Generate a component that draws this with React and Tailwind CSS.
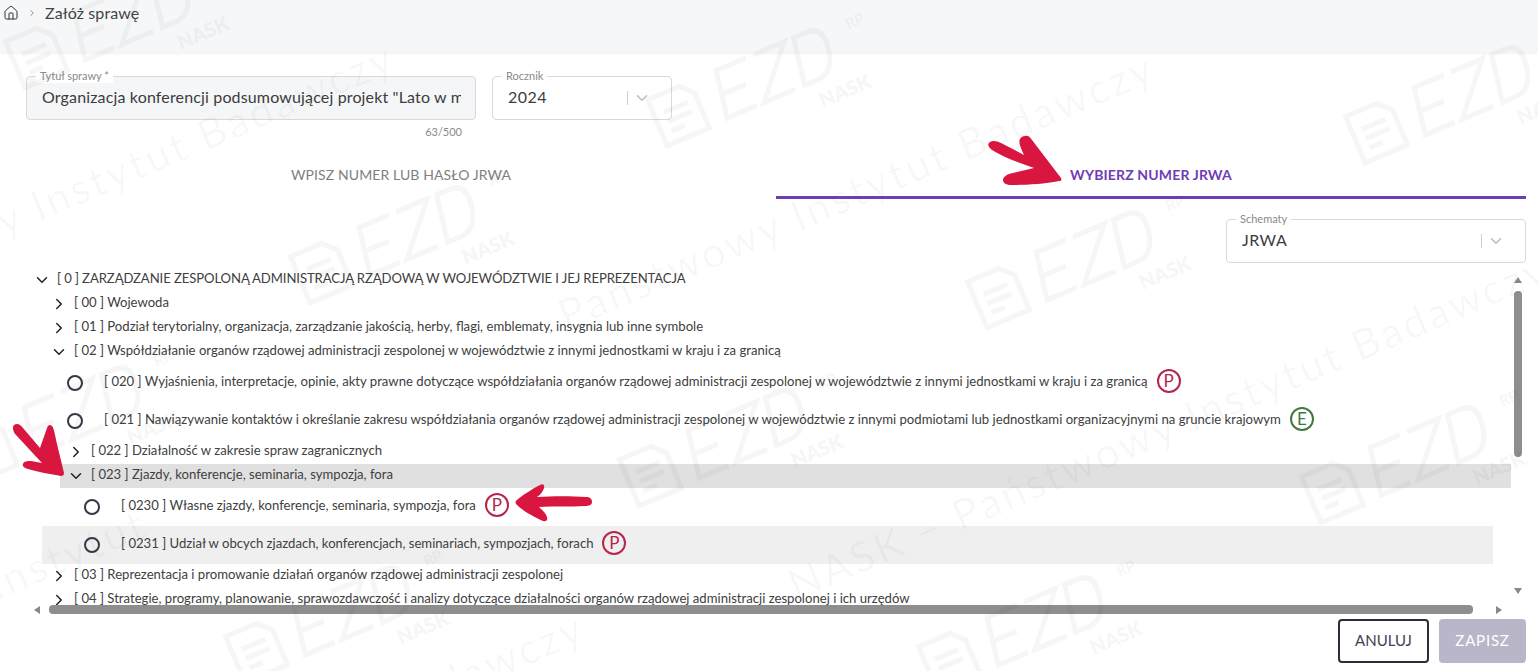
import { ChevronDown, ChevronRight, House } from "lucide-react";

const FONT = "font-['Lato','Liberation_Sans',sans-serif]";

const TREE = [
  { kind: "open", ml: "ml-0", tight: true, label: "[ 0 ] ZARZĄDZANIE ZESPOLONĄ ADMINISTRACJĄ RZĄDOWĄ W WOJEWÓDZTWIE I JEJ REPREZENTACJA" },
  { kind: "closed", ml: "ml-[17px]", label: "[ 00 ] Wojewoda" },
  { kind: "closed", ml: "ml-[17px]", label: "[ 01 ] Podział terytorialny, organizacja, zarządzanie jakością, herby, flagi, emblematy, insygnia lub inne symbole" },
  { kind: "open", ml: "ml-[17px]", label: "[ 02 ] Współdziałanie organów rządowej administracji zespolonej w województwie z innymi jednostkami w kraju i za granicą" },
  { kind: "leaf", ml: "ml-[-1px]", label: "[ 020 ] Wyjaśnienia, interpretacje, opinie, akty prawne dotyczące współdziałania organów rządowej administracji zespolonej w województwie z innymi jednostkami w kraju i za granicą", badge: "P" },
  { kind: "leaf", ml: "ml-[-1px]", label: "[ 021 ] Nawiązywanie kontaktów i określanie zakresu współdziałania organów rządowej administracji zespolonej w województwie z innymi podmiotami lub jednostkami organizacyjnymi na gruncie krajowym", badge: "E" },
  { kind: "closed", ml: "ml-[34px]", label: "[ 022 ] Działalność w zakresie spraw zagranicznych" },
  { kind: "open", ml: "ml-[34px]", label: "[ 023 ] Zjazdy, konferencje, seminaria, sympozja, fora", bg: "bg-[#e0e0e0]" },
  { kind: "leaf", ml: "ml-[16px]", label: "[ 0230 ] Własne zjazdy, konferencje, seminaria, sympozja, fora", badge: "P" },
  { kind: "leaf", ml: "ml-[16px]", label: "[ 0231 ] Udział w obcych zjazdach, konferencjach, seminariach, sympozjach, forach", badge: "P", bg: "bg-[#efefef]" },
  { kind: "closed", ml: "ml-[17px]", label: "[ 03 ] Reprezentacja i promowanie działań organów rządowej administracji zespolonej" },
  { kind: "closed", ml: "ml-[17px]", label: "[ 04 ] Strategie, programy, planowanie, sprawozdawczość i analizy dotyczące działalności organów rządowej administracji zespolonej i ich urzędów" },
];

// faint background marks: centre of the "EZD" letters of each logo
const LOGOS = [
  [130, 15], [415, 230], [772, 73], [1092, 255], [1470, 90], [80, 410], [744, 433], [1426, 450], [1043, 620], [350, 610],
];

const WATERMARK_LINES = [
  { text: "Państwowy Instytut Badawczy", pos: "left-[-200px] top-[285px]" },
  { text: "Państwowy Instytut Badawczy", pos: "left-[560px] top-[295px]" },
  { text: "NASK – Państwowy Instytut Badawczy", pos: "left-[790px] top-[565px]" },
  { text: "Instytut", pos: "left-[-10px] top-[565px]" },
  { text: "Państwowy Instytut Badawczy", pos: "left-[-10px] top-[855px]" },
];

function Watermark() {
  return (
    <div className="pointer-events-none absolute inset-0 z-10 overflow-hidden text-black/[0.03]">
      {WATERMARK_LINES.map((line, i) => (
        <span
          key={i}
          className={`absolute ${line.pos} origin-left -rotate-[23deg] whitespace-nowrap text-[42px] leading-none tracking-[3px]`}
        >
          {line.text}
        </span>
      ))}
      {LOGOS.map(([cx, cy], i) => (
        <svg
          key={i}
          width="290"
          height="200"
          viewBox="0 0 290 200"
          className="absolute"
          style={{ left: cx - 145, top: cy - 100 }}
        >
          <g transform="rotate(-23 145 100)" opacity="0.03">
            <g fill="none" stroke="#000" strokeWidth="5">
              <path d="M20 76h34l12 12v38H20z" />
              <path d="M30 94h26M30 104h26M30 114h14" />
              <g transform="translate(18 0) skewX(-10)">
                <path d="M122 76H90v48h32M92 100h24" />
                <path d="M130 76h34l-34 48h34" />
                <path d="M174 76h14q18 0 18 24t-18 24h-14z" />
              </g>
            </g>
            <text x="232" y="90" fontSize="15" fontWeight="700" fontFamily="Lato, sans-serif">RP</text>
            <text x="178" y="152" fontSize="20" fontWeight="900" fontFamily="Lato, sans-serif">NASK</text>
          </g>
        </svg>
      ))}
    </div>
  );
}

function Fieldset({ label, className, children }) {
  return (
    <div className={`relative h-11 rounded border border-[#d9d9d9] ${className}`}>
      <span className="absolute -top-[8px] left-[9px] bg-white px-1 text-[11px] leading-[14px] text-[#8a8a8a]">
        {label}
      </span>
      {children}
    </div>
  );
}

function SelectField({ label, value, className }) {
  return (
    <Fieldset label={label} className={`flex items-center justify-between pl-[15px] pr-[20px] ${className}`}>
      <span className="pb-[2px] text-base tracking-[0.5px] text-[#3c3c3c]">{value}</span>
      <span className="flex items-center gap-[5px]">
        <span className="h-[14px] w-px bg-[#cfcfcf]" />
        <ChevronDown size={18} strokeWidth={2} className="text-[#bdbdbd]" />
      </span>
    </Fieldset>
  );
}

function Badge({ letter }) {
  const color = letter === "P" ? "border-[#b5264c] text-[#b5264c]" : "border-[#3f7a3f] text-[#3f7a3f]";
  return (
    <span className={`mb-[5px] ml-[9px] flex h-6 w-6 shrink-0 items-center justify-center rounded-full border-2 text-[17px] leading-none ${color}`}>
      {letter}
    </span>
  );
}

function TreeRow({ row }) {
  const isLeaf = row.kind === "leaf";
  return (
    <div className={`flex w-[1451px] shrink-0 items-center ${row.ml} ${row.bg || ""} ${isLeaf ? "h-[38px]" : "h-6"}`}>
      {isLeaf ? (
        <span className="ml-[42px] mr-[21px] h-4 w-4 shrink-0 rounded-full border-2 border-[#3a3648]" />
      ) : (
        <span className="flex w-[31px] shrink-0 justify-center">
          {row.kind === "open" ? (
            <ChevronDown size={18} strokeWidth={2} className="text-[#222222]" />
          ) : (
            <ChevronRight size={18} strokeWidth={2} className="text-[#222222]" />
          )}
        </span>
      )}
      <span className={`whitespace-nowrap pb-[2px] text-[13.14px] text-[#404040] ${row.tight ? "tracking-[-0.1px]" : ""}`}>
        {row.label}
      </span>
      {row.badge && <Badge letter={row.badge} />}
    </div>
  );
}

function Arrow({ className, d, viewBox }) {
  return (
    <svg viewBox={viewBox} className={`pointer-events-none absolute z-20 ${className}`}>
      <path d={d} fill="#d9163f" />
    </svg>
  );
}

export default function App() {
  return (
    <div className={`relative h-[671px] w-[1538px] overflow-hidden bg-white ${FONT}`}>
      <Watermark />

      {/* Breadcrumb */}
      <div className="flex h-[52px] items-start gap-[8px] bg-[#f6f7f8] pl-[3px] pt-[5px] shadow-[0_1px_3px_rgba(0,0,0,0.08)]">
        <House size={16} strokeWidth={1.5} className="text-[#333333]" />
        <ChevronRight size={10} className="mt-[3px] text-[#777777]" />
        <span className="-mt-px text-base leading-[18px] tracking-[0.1px] text-[#444444]">Załóż sprawę</span>
      </div>

      <div className="pl-[26px] pr-[12px]">
        {/* Title and year */}
        <div className="flex gap-4 pt-[24px]">
          <div className="w-[450px]">
            <Fieldset label="Tytuł sprawy *" className="flex items-center bg-[#f5f6f7] pl-[15px] pr-[14px]">
              <span className="min-w-0 overflow-hidden whitespace-nowrap pb-[2px] text-base tracking-[0.15px] text-[#3c3c3c]">
                Organizacja konferencji podsumowującej projekt "Lato w mieście"
              </span>
            </Fieldset>
            <p className="mt-[5px] pr-[14px] text-right text-[11px] leading-[14px] text-[#8a8a8a]">63/500</p>
          </div>
          <SelectField label="Rocznik" value="2024" className="w-[180px]" />
        </div>

        {/* Tabs */}
        <div className="mt-[11px] flex h-[49px]">
          <div className="flex flex-1 items-center justify-center text-sm tracking-[0.1px] text-[#808080]">
            WPISZ NUMER LUB HASŁO JRWA
          </div>
          <div className="flex flex-1 items-center justify-center border-b-[3px] border-[#6f3eb5] pt-[3px] text-sm font-bold tracking-[0.15px] text-[#6f3eb5]">
            WYBIERZ NUMER JRWA
          </div>
        </div>

        <div className="mt-5 flex justify-end">
          <SelectField label="Schematy" value="JRWA" className="w-[300px]" />
        </div>

        {/* Tree with scrollbars */}
        <div className="mt-[3px] flex h-[339px] items-stretch">
          <div className="w-[1486px] shrink-0 overflow-hidden pt-[2px]">
            {TREE.map((row) => (
              <TreeRow key={row.label} row={row} />
            ))}
          </div>
          <div className="ml-[2px] flex w-2 flex-col items-center pt-[11px]">
            <span className="h-0 w-0 border-x-[4px] border-b-[6px] border-x-transparent border-b-[#888888]" />
            <span className="mt-2 h-[166px] w-2 shrink-0 rounded bg-[#8e8e8e]" />
            <span className="mt-[131px] h-0 w-0 border-x-[4px] border-t-[6px] border-x-transparent border-t-[#888888]" />
          </div>
        </div>
        <div className="flex h-[9px] items-center">
          <span className="ml-[8px] h-0 w-0 border-y-[4px] border-r-[6px] border-y-transparent border-r-[#888888]" />
          <span className="ml-[9px] h-[9px] w-[1424px] rounded bg-[#8e8e8e]" />
          <span className="ml-[23px] h-0 w-0 border-y-[4px] border-l-[6px] border-y-transparent border-l-[#888888]" />
        </div>

        {/* Footer buttons */}
        <div className="mt-[5px] flex justify-end gap-[10px]">
          <button className="h-11 w-[91px] rounded border-2 border-[#2f2b3d] bg-white pb-[2px] text-[15px] text-[#444054]">ANULUJ</button>
          <button className="h-11 w-[87px] rounded bg-[#b9b6c9] pb-[2px] text-[15px] tracking-[0.8px] text-white">ZAPISZ</button>
        </div>
      </div>

      {/* Annotation arrows */}
      <Arrow
        className="left-[987px] top-[135px] h-[50px] w-[76px]"
        viewBox="0 0 76 50"
        d="M38 1c3-1 5 1 7 4l29 38c1 2 0 3-2 3-15 3-33 4-47 4-6 0-9-2-9-5s4-6 10-7l21-5C32 28 16 22 5 15 1 12 0 9 3 7c3-2 7-1 11 1l23 12C34 14 31 7 33 4c1-2 3-3 5-3z"
      />
      <Arrow
        className="left-[10px] top-[424px] h-[52px] w-[56px]"
        viewBox="0 0 56 52"
        d="M4 1c3-2 6-1 9 3l17 20 7-20c1-3 3-4 5-2 2 2 3 9 5 18 2 9 5 20 7 29 0 2-1 3-3 3-10-2-24-4-33-7-4-1-6-3-5-5 1-3 4-3 8-3l11 2L6 11C3 8 2 3 4 1z"
      />
      <Arrow
        className="left-[515px] top-[484px] h-[38px] w-[77px]"
        viewBox="0 0 77 38"
        d="M25 1c3-2 5 0 4 3-1 4-4 7-7 9 16-1 35-1 49 0 4 0 6 2 6 5s-3 4-7 4c-15 1-32 0-46 1 3 3 7 6 8 10 1 3-1 5-4 4C19 33 8 27 2 21c-2-2-2-4 0-5C8 11 17 5 25 1z"
      />
    </div>
  );
}
